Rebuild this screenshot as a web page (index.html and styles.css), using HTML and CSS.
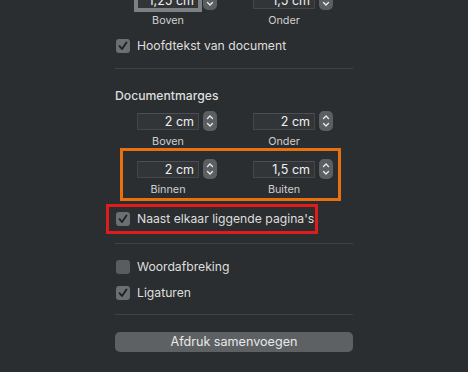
FILE: index.html
```html
<!DOCTYPE html>
<html>
<head>
<meta charset="utf-8">
<link rel="stylesheet" href="styles.css">
</head>
<body>
<div class="panel">
  <div class="steppers first">
    <div class="group">
      <div class="ctl"><div class="field focus">1,25 cm</div><div class="stepper"><svg viewBox="0 0 14 20"><path d="M4.5 7.5 L7 5 L9.5 7.5"/><path d="M4.5 12.5 L7 15 L9.5 12.5"/></svg></div></div>
      <div class="lbl">Boven</div>
    </div>
    <div class="group">
      <div class="ctl"><div class="field">1,5 cm</div><div class="stepper"><svg viewBox="0 0 14 20"><path d="M4.5 7.5 L7 5 L9.5 7.5"/><path d="M4.5 12.5 L7 15 L9.5 12.5"/></svg></div></div>
      <div class="lbl">Onder</div>
    </div>
  </div>

  <div class="check row-hoofd"><span class="box on"><svg viewBox="0 0 14 14"><path d="M3.5 7.2 L6 10 L10.5 3.5"/></svg></span><span>Hoofdtekst van document</span></div>

  <div class="sep sep1"></div>

  <div class="heading">Documentmarges</div>

  <div class="steppers second">
    <div class="group">
      <div class="ctl"><div class="field">2 cm</div><div class="stepper"><svg viewBox="0 0 14 20"><path d="M4.5 7.5 L7 5 L9.5 7.5"/><path d="M4.5 12.5 L7 15 L9.5 12.5"/></svg></div></div>
      <div class="lbl">Boven</div>
    </div>
    <div class="group">
      <div class="ctl"><div class="field">2 cm</div><div class="stepper"><svg viewBox="0 0 14 20"><path d="M4.5 7.5 L7 5 L9.5 7.5"/><path d="M4.5 12.5 L7 15 L9.5 12.5"/></svg></div></div>
      <div class="lbl">Onder</div>
    </div>
  </div>

  <div class="orange">
    <div class="steppers inner">
      <div class="group">
        <div class="ctl"><div class="field">2 cm</div><div class="stepper"><svg viewBox="0 0 14 20"><path d="M4.5 7.5 L7 5 L9.5 7.5"/><path d="M4.5 12.5 L7 15 L9.5 12.5"/></svg></div></div>
        <div class="lbl">Binnen</div>
      </div>
      <div class="group">
        <div class="ctl"><div class="field">1,5 cm</div><div class="stepper"><svg viewBox="0 0 14 20"><path d="M4.5 7.5 L7 5 L9.5 7.5"/><path d="M4.5 12.5 L7 15 L9.5 12.5"/></svg></div></div>
        <div class="lbl">Buiten</div>
      </div>
    </div>
  </div>

  <div class="red">
    <div class="check"><span class="box on"><svg viewBox="0 0 14 14"><path d="M3.5 7.2 L6 10 L10.5 3.5"/></svg></span><span>Naast elkaar liggende pagina's</span></div>
  </div>

  <div class="sep sep2"></div>

  <div class="check row-woord"><span class="box"></span><span>Woordafbreking</span></div>
  <div class="check row-lig"><span class="box on"><svg viewBox="0 0 14 14"><path d="M3.5 7.2 L6 10 L10.5 3.5"/></svg></span><span>Ligaturen</span></div>

  <div class="sep sep3"></div>

  <div class="button">Afdruk samenvoegen</div>
</div>
</body>
</html>
```

FILE: styles.css
```css
html, body {
  margin: 0;
  padding: 0;
  background: #2b2e30;
  overflow: hidden;
}
body {
  width: 468px;
  height: 372px;
  font-family: Inter, "Liberation Sans", sans-serif;
  color: #dedede;
  font-size: 12.2px;
  white-space: nowrap;
}
.panel {
  margin-left: 115px;
  width: 238px;
}
.steppers {
  display: flex;
  gap: 36px;
  padding-left: 22px;
}
.steppers.first { margin-top: -10px; }
.steppers.second { margin-top: 7px; }
.steppers.inner { padding-left: 14px; padding-top: 8px; padding-bottom: 1px; }
.group {
  display: flex;
  flex-direction: column;
  width: 80px;
}
.ctl {
  display: flex;
  align-items: center;
  gap: 4px;
  height: 20px;
}
.field {
  box-sizing: border-box;
  width: 62px;
  height: 17px;
  background: #323538;
  border: 1px solid #44474a;
  border-top-color: #4c4f51;
  text-align: right;
  padding-right: 4px;
  line-height: 15px;
  font-size: 12.5px;
  color: #f0f0f0;
}
.field.focus {
  box-shadow: 0 0 0 3px #7d8083;
  border-color: #7d8083;
}
.stepper {
  width: 14px;
  height: 20px;
  border-radius: 5px;
  background: #5c5f62;
}
.stepper svg {
  display: block;
  width: 14px;
  height: 20px;
}
.stepper path, .box path {
  fill: none;
  stroke: #ececec;
  stroke-width: 1.3;
  stroke-linecap: round;
  stroke-linejoin: round;
}
.lbl {
  width: 62px;
  text-align: center;
  font-size: 10.8px;
  line-height: 14px;
  margin-top: 4px;
  color: #cfcfcf;
}
.check {
  display: flex;
  align-items: center;
  gap: 7px;
  height: 20px;
  line-height: 20px;
}
.box {
  box-sizing: border-box;
  width: 14px;
  height: 14px;
  border-radius: 3px;
  background: #5a5d60;
  flex: none;
  margin-left: 1px;
}
.box.on { background: #6c6f72; }
.box svg { display: block; width: 14px; height: 14px; }
.box.on path { stroke: #1d1f20; stroke-width: 1.8; }
.row-hoofd { margin-top: 8px; }
.sep {
  height: 1px;
  background: #3f4244;
}
.sep1 { margin-top: 12px; }
.heading {
  margin-top: 19px;
  line-height: 16px;
  font-weight: 500;
}
.orange {
  margin-top: -1px;
  margin-left: 5px;
  width: 221px;
  box-sizing: border-box;
  border: 3px solid #e8700f;
}
.red {
  margin-top: 3px;
  margin-left: -9px;
  width: 212px;
  box-sizing: border-box;
  border: 3px solid #e01b1b;
  padding: 2px 0 2px 6px;
}
.sep2 { margin-top: 9px; }
.row-woord { margin-top: 13px; }
.row-lig { margin-top: 6px; }
.sep3 { margin-top: 11px; }
.button {
  margin-top: 17px;
  height: 20px;
  line-height: 20px;
  border-radius: 5px;
  background: #5e6163;
  text-align: center;
  color: #e8e8e8;
  font-size: 12.6px;
}
```
